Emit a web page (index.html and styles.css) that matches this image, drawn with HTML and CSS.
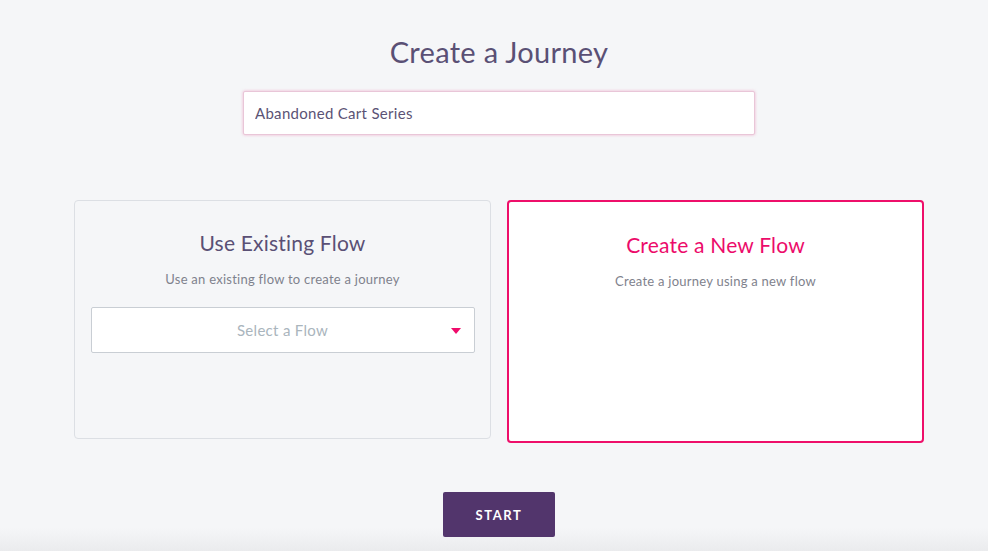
FILE: index.html
```html
<!DOCTYPE html>
<html lang="en">
<head>
<meta charset="utf-8">
<title>Create a Journey</title>
<link rel="stylesheet" href="styles.css">
</head>
<body>
<main class="page">
  <h1 class="title">Create a Journey</h1>
  <div class="name-field">
    <input class="name-input" type="text" value="Abandoned Cart Series">
  </div>
  <section class="options">
    <div class="card card-existing">
      <h2 class="card-title">Use Existing Flow</h2>
      <p class="card-sub">Use an existing flow to create a journey</p>
      <div class="select">
        <span class="select-placeholder">Select a Flow</span>
        <svg class="select-caret" width="10" height="6" viewBox="0 0 10 6"><path d="M0 0H10L5 6Z" fill="#ef0b6b"/></svg>
      </div>
    </div>
    <div class="card card-new">
      <h2 class="card-title card-title-active">Create a New Flow</h2>
      <p class="card-sub">Create a journey using a new flow</p>
    </div>
  </section>
  <div class="actions">
    <button class="start-btn" type="button">START</button>
  </div>
</main>
</body>
</html>
```
FILE: styles.css
```css
* { box-sizing: border-box; }
html, body { margin: 0; padding: 0; }
body {
  width: 988px;
  height: 551px;
  overflow: hidden;
  font-family: Lato, "Open Sans", "Liberation Sans", sans-serif;
  background: linear-gradient(to bottom, #f5f6f8 0, #f5f6f8 528px, #eaebed 551px);
  color: #5a5075;
}
.page {
  display: flex;
  flex-direction: column;
  align-items: center;
  padding-top: 33px;
  padding-left: 10px;
}
.title {
  margin: 0;
  font-size: 29px;
  font-weight: 400;
  line-height: 38px;
  color: #5a5075;
  letter-spacing: 0.3px;
}
.name-field {
  margin-top: 20px;
}
.name-input {
  display: block;
  width: 512px;
  height: 44px;
  border: 1px solid #e9c6d8;
  border-radius: 2px;
  box-shadow: 0 0 3px rgba(236, 150, 190, 0.7);
  background: #fff;
  padding: 0 11px;
  font-family: inherit;
  font-size: 15px;
  letter-spacing: 0.3px;
  color: #5b5375;
  outline: none;
}
.options {
  margin-top: 65px;
  display: flex;
  gap: 16px;
  align-items: flex-start;
}
.card {
  width: 417px;
  border-radius: 4px;
  display: flex;
  flex-direction: column;
  align-items: center;
}
.card-existing {
  height: 239px;
  border: 1px solid #dcdfe4;
  background: #f5f6f8;
  padding: 29px 16px 0;
}
.card-new {
  height: 243px;
  border: 2px solid #ee0f6a;
  background: #fff;
  padding: 30px 16px 0;
}
.card-title {
  margin: 0;
  font-size: 21px;
  font-weight: 400;
  line-height: 26px;
  color: #5a5075;
  letter-spacing: 0.2px;
}
.card-title-active { color: #ec0b6a; }
.card-sub {
  margin: 14px 0 0;
  font-size: 13px;
  line-height: 18px;
  letter-spacing: 0.25px;
  color: #7f828d;
}
.select {
  margin-top: 19px;
  width: 384px;
  height: 46px;
  background: #fff;
  border: 1px solid #c9ced4;
  border-radius: 2px;
  display: flex;
  align-items: center;
  justify-content: center;
  position: relative;
}
.select-placeholder {
  font-size: 15px;
  letter-spacing: 0.3px;
  color: #aab5bd;
}
.select-caret {
  position: absolute;
  right: 13px;
  top: 20px;
}
.actions {
  margin-top: 49px;
}
.start-btn {
  width: 112px;
  height: 45px;
  border: none;
  border-radius: 2px;
  background: #52356c;
  color: #fff;
  font-family: inherit;
  font-size: 13px;
  font-weight: 700;
  letter-spacing: 1.6px;
  padding: 0;
}
```
